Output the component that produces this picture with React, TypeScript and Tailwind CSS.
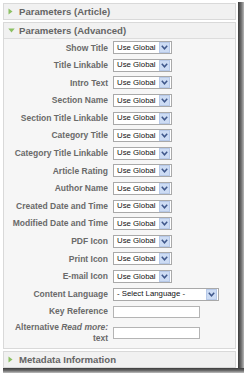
import React from "react";

const rows = [
  "Show Title",
  "Title Linkable",
  "Intro Text",
  "Section Name",
  "Section Title Linkable",
  "Category Title",
  "Category Title Linkable",
  "Article Rating",
  "Author Name",
  "Created Date and Time",
  "Modified Date and Time",
  "PDF Icon",
  "Print Icon",
  "E-mail Icon",
];

function Arrow() {
  return (
    <span className="flex h-[11px] w-[11px] shrink-0 items-center justify-center border border-[#b7c9e8] bg-[#cddcf4]">
      <svg width="7" height="5" viewBox="0 0 7 5">
        <path d="M0.8 0.8 L3.5 3.8 L6.2 0.8" fill="none" stroke="#3f578a" strokeWidth="1.5" />
      </svg>
    </span>
  );
}

function Right() {
  return (
    <svg width="5" height="7" viewBox="0 0 5 7" className="shrink-0">
      <path d="M0.5 0.5 L4.5 3.5 L0.5 6.5 Z" fill="#8cc063" />
    </svg>
  );
}

function Down() {
  return (
    <svg width="7" height="5" viewBox="0 0 7 5" className="shrink-0">
      <path d="M0.3 0.5 L6.7 0.5 L3.5 4.5 Z" fill="#8cc063" />
    </svg>
  );
}

function Header({ open, title }: { open?: boolean; title: string }) {
  return (
    <div className="flex h-[15px] items-center bg-[#f1f1f1] pl-[4px]">
      <div className="flex w-[11px] items-center">{open ? <Down /> : <Right />}</div>
      <span className="text-[9.6px] font-bold leading-none text-[#656565]">{title}</span>
    </div>
  );
}

function Label({ children }: { children: React.ReactNode }) {
  return (
    <div className="w-[104px] shrink-0 text-right text-[8.5px] font-bold leading-[10.6px] text-[#6a6a6a]">
      {children}
    </div>
  );
}

export default function App() {
  return (
    <div
      className="h-[373px] w-[244px] overflow-hidden bg-white"
      style={{ fontFamily: '"Liberation Sans", Arial, sans-serif' }}
    >
      <div className="flex h-[368px]">
        <div className="flex w-[238px] flex-col pl-[3px] pr-[2px] pt-[3px]">
          <div className="mb-[2px] border border-[#d9d9d9]">
            <Header title="Parameters (Article)" />
          </div>
          <div className="mb-[2px] border border-[#d9d9d9]">
            <div className="border-b border-[#dcdcdc]">
              <Header open title="Parameters (Advanced)" />
            </div>
            <div className="flex h-[309px] flex-col bg-[#f6f6f6]">
              {rows.map((r) => (
                <div key={r} className="flex h-[17.6px] items-center gap-[5px]">
                  <Label>{r}</Label>
                  <div className="flex h-[13px] w-[59px] items-center justify-between border border-[#a9a9a9] bg-white pl-[3px] pr-[1px]">
                    <span className="text-[7.8px] leading-none text-[#111]">Use Global</span>
                    <Arrow />
                  </div>
                </div>
              ))}
              <div className="flex h-[17.6px] items-center gap-[5px]">
                <Label>Content Language</Label>
                <div className="flex h-[13px] w-[106px] items-center justify-between border border-[#a9a9a9] bg-white pl-[3px] pr-[1px]">
                  <span className="text-[7.8px] leading-none text-[#111]">- Select Language -</span>
                  <Arrow />
                </div>
              </div>
              <div className="flex h-[17.6px] items-center gap-[5px]">
                <Label>Key Reference</Label>
                <div className="h-[12px] w-[87px] border border-[#b4b4b4] bg-white" />
              </div>
              <div className="flex h-[24px] items-center gap-[5px]">
                <Label>
                  Alternative <i>Read more:</i>
                  <br />
                  text
                </Label>
                <div className="h-[12px] w-[87px] border border-[#b4b4b4] bg-white" />
              </div>
            </div>
          </div>
          <div className="border border-[#d9d9d9]">
            <Header title="Metadata Information" />
          </div>
        </div>
        <div className="mt-[2px] w-[6px] bg-gradient-to-r from-[#3c3c3c] via-[#6a6a6a] to-[#b8b8b8]" />
      </div>
      <div className="ml-[3px] h-[5px] bg-gradient-to-b from-[#3c3c3c] via-[#6a6a6a] to-[#c0c0c0]" />
    </div>
  );
}
